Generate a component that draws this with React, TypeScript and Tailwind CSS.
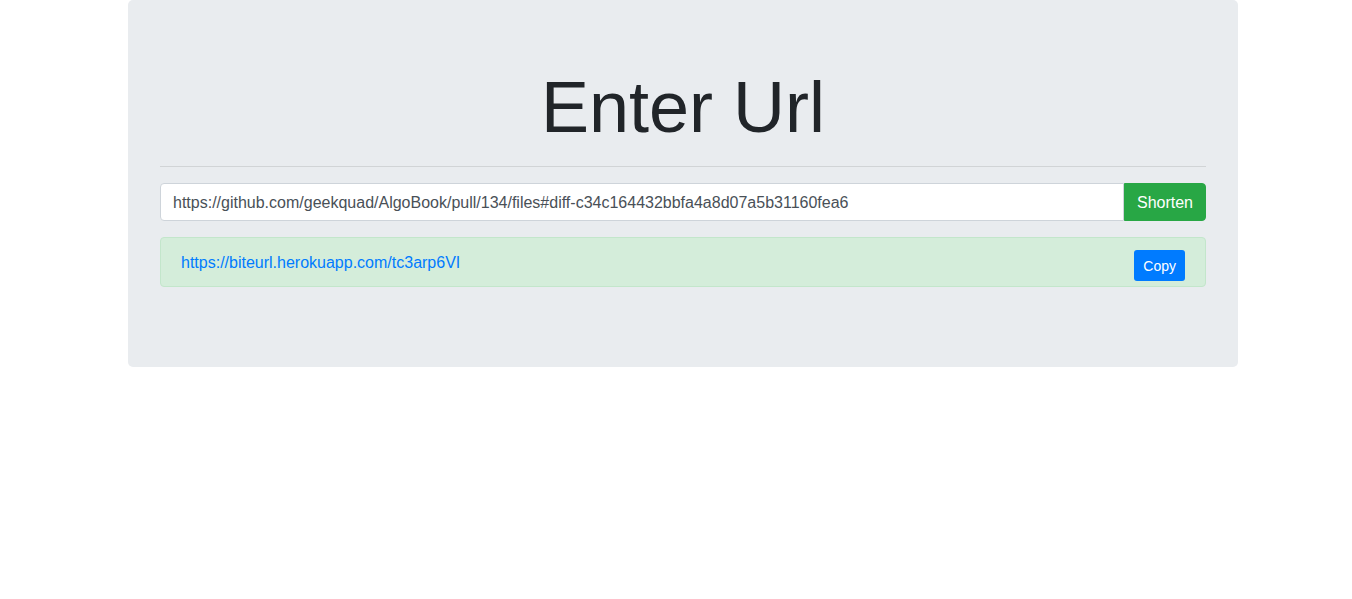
import React, { useState } from 'react';

const App: React.FC = () => {
  const [url, setUrl] = useState('https://github.com/geekquad/AlgoBook/pull/134/files#diff-c34c164432bbfa4a8d07a5b31160fea6');
  const short = 'https://biteurl.herokuapp.com/tc3arp6VI';

  return (
    <div className="min-h-[599px] bg-white font-['Liberation_Sans',Arial,sans-serif] text-[#212529]">
      <div className="w-[1110px] ml-[128px] bg-[#e9ecef] rounded-[5px] px-8 py-16">
        <h1 className="text-center text-[72px] leading-[1.2] font-light">Enter Url</h1>
        <hr className="my-4 border-0 border-t border-[rgba(0,0,0,0.1)]" />
        <div className="flex mb-4">
          <input
            value={url}
            onChange={(e) => setUrl(e.target.value)}
            className="flex-1 h-[38px] px-3 pt-[2px] text-base text-[#495057] bg-white border border-[#ced4da] rounded-l-[4px] outline-none"
          />
          <button className="h-[38px] px-3 pt-[2px] text-base text-white bg-[#28a745] border border-[#28a745] rounded-r-[4px]">
            Shorten
          </button>
        </div>
        <div className="relative px-5 pt-[13px] pb-[11px] mb-4 bg-[#d4edda] border border-[#c3e6cb] rounded-[4px] leading-6">
          <a href="#" className="text-[#007bff]">{short}</a>
          <button className="absolute right-5 top-3 h-[31px] px-[9px] text-sm text-white bg-[#007bff] rounded-[3px]">
            Copy
          </button>
        </div>
      </div>
    </div>
  );
};

export default App;
